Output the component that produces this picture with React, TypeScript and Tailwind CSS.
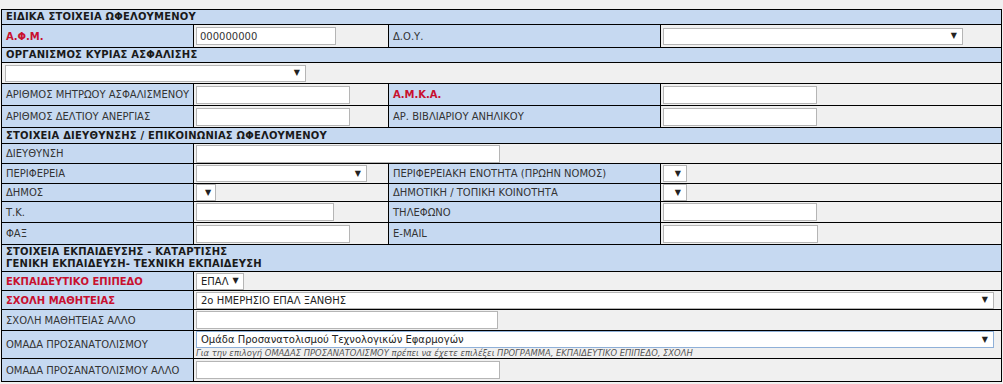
import React from "react";

const FONT = { fontFamily: '"DejaVu Sans", Verdana, sans-serif' };

function Field({ w, value = "" }: { w: string; value?: string }) {
  return (
    <input
      readOnly
      defaultValue={value}
      className={`${w} h-[18px] border border-[#b5b5b5] bg-white px-[3px] text-[10px] text-[#333] outline-none block`}
    />
  );
}

function Pick({
  w,
  value = "",
  focus = false,
}: {
  w: string;
  value?: string;
  focus?: boolean;
}) {
  return (
    <div
      className={`${w} h-[17px] border ${
        focus ? "border-[#8fb0d8]" : "border-[#b5b5b5]"
      } bg-white flex items-center justify-between gap-[4px] pl-[4px] pr-[5px] text-[10px] text-[#222]`}
    >
      <span className="whitespace-nowrap">{value}</span>
      <span className="text-[8px] leading-none">▼</span>
    </div>
  );
}

function Head({ children, h }: { children: React.ReactNode; h: string }) {
  return (
    <tr className={h}>
      <td colSpan={4} className="bg-[#c6d9f1] border border-black px-[4px] font-bold text-[10px] tracking-[0.2px] text-[#1a1a1a] leading-[12px] align-middle">
        {children}
      </td>
    </tr>
  );
}

function Label({ children, red = false }: { children: React.ReactNode; red?: boolean }) {
  return (
    <td
      className={`bg-[#c6d9f1] border border-black px-[4px] whitespace-nowrap text-[10px] ${
        red ? "text-[#c8102e] font-bold" : "text-[#333]"
      }`}
    >
      {children}
    </td>
  );
}

function Cell({ children, span = 1 }: { children?: React.ReactNode; span?: number }) {
  return (
    <td colSpan={span} className="border border-black px-[2px] align-middle">
      {children}
    </td>
  );
}

export default function App() {
  return (
    <div className="min-h-screen bg-[#f0f0f0] pt-[9px] pl-px" style={FONT}>
      <table className="table-fixed border-collapse w-[1000px]">
        <colgroup>
          <col className="w-[192px]" />
          <col className="w-[195px]" />
          <col className="w-[272px]" />
          <col className="w-[341px]" />
        </colgroup>
        <tbody>
          <Head h="h-[15px]">ΕΙΔΙΚΑ ΣΤΟΙΧΕΙΑ ΩΦΕΛΟΥΜΕΝΟΥ</Head>
          <tr className="h-[23px]">
            <Label red>Α.Φ.Μ.</Label>
            <Cell>
              <Field w="w-[140px]" value="000000000" />
            </Cell>
            <Label>Δ.Ο.Υ.</Label>
            <Cell>
              <Pick w="w-[300px]" />
            </Cell>
          </tr>
          <Head h="h-[15px]">ΟΡΓΑΝΙΣΜΟΣ ΚΥΡΙΑΣ ΑΣΦΑΛΙΣΗΣ</Head>
          <tr className="h-[21px]">
            <td colSpan={4} className="border border-black px-[3px]">
              <Pick w="w-[301px]" />
            </td>
          </tr>
          <tr className="h-[22px]">
            <Label>ΑΡΙΘΜΟΣ ΜΗΤΡΩΟΥ ΑΣΦΑΛΙΣΜΕΝΟΥ</Label>
            <Cell>
              <Field w="w-[154px]" />
            </Cell>
            <Label red>Α.Μ.Κ.Α.</Label>
            <Cell>
              <Field w="w-[154px]" />
            </Cell>
          </tr>
          <tr className="h-[22px]">
            <Label>ΑΡΙΘΜΟΣ ΔΕΛΤΙΟΥ ΑΝΕΡΓΙΑΣ</Label>
            <Cell>
              <Field w="w-[154px]" />
            </Cell>
            <Label>ΑΡ. ΒΙΒΛΙΑΡΙΟΥ ΑΝΗΛΙΚΟΥ</Label>
            <Cell>
              <Field w="w-[154px]" />
            </Cell>
          </tr>
          <Head h="h-[16px]">ΣΤΟΙΧΕΙΑ ΔΙΕΥΘΥΝΣΗΣ / ΕΠΙΚΟΙΝΩΝΙΑΣ ΩΦΕΛΟΥΜΕΝΟΥ</Head>
          <tr className="h-[20px]">
            <Label>ΔΙΕΥΘΥΝΣΗ</Label>
            <Cell span={3}>
              <Field w="w-[304px]" />
            </Cell>
          </tr>
          <tr className="h-[20px]">
            <Label>ΠΕΡΙΦΕΡΕΙΑ</Label>
            <Cell>
              <Pick w="w-[171px]" />
            </Cell>
            <Label>ΠΕΡΙΦΕΡΕΙΑΚΗ ΕΝΟΤΗΤΑ (ΠΡΩΗΝ ΝΟΜΟΣ)</Label>
            <Cell>
              <Pick w="w-[24px]" />
            </Cell>
          </tr>
          <tr className="h-[18px]">
            <Label>ΔΗΜΟΣ</Label>
            <Cell>
              <Pick w="w-[20px]" />
            </Cell>
            <Label>ΔΗΜΟΤΙΚΗ / ΤΟΠΙΚΗ ΚΟΙΝΟΤΗΤΑ</Label>
            <Cell>
              <Pick w="w-[24px]" />
            </Cell>
          </tr>
          <tr className="h-[21px]">
            <Label>Τ.Κ.</Label>
            <Cell>
              <Field w="w-[138px]" />
            </Cell>
            <Label>ΤΗΛΕΦΩΝΟ</Label>
            <Cell>
              <Field w="w-[154px]" />
            </Cell>
          </tr>
          <tr className="h-[22px]">
            <Label>ΦΑΞ</Label>
            <Cell>
              <Field w="w-[154px]" />
            </Cell>
            <Label>E-MAIL</Label>
            <Cell>
              <Field w="w-[155px]" />
            </Cell>
          </tr>
          <Head h="h-[27px]">
            ΣΤΟΙΧΕΙΑ ΕΚΠΑΙΔΕΥΣΗΣ - ΚΑΤΑΡΤΙΣΗΣ
            <br />
            ΓΕΝΙΚΗ ΕΚΠΑΙΔΕΥΣΗ- ΤΕΧΝΙΚΗ ΕΚΠΑΙΔΕΥΣΗ
          </Head>
          <tr className="h-[19px]">
            <Label red>ΕΚΠΑΙΔΕΥΤΙΚΟ ΕΠΙΠΕΔΟ</Label>
            <Cell span={3}>
              <Pick w="w-[48px]" value="ΕΠΑΛ" />
            </Cell>
          </tr>
          <tr className="h-[19px]">
            <Label red>ΣΧΟΛΗ ΜΑΘΗΤΕΙΑΣ</Label>
            <Cell span={3}>
              <Pick w="w-[798px]" value="2ο ΗΜΕΡΗΣΙΟ ΕΠΑΛ ΞΑΝΘΗΣ" />
            </Cell>
          </tr>
          <tr className="h-[21px]">
            <Label>ΣΧΟΛΗ ΜΑΘΗΤΕΙΑΣ ΑΛΛΟ</Label>
            <Cell span={3}>
              <Field w="w-[302px]" />
            </Cell>
          </tr>
          <tr className="h-[28px]">
            <Label>ΟΜΑΔΑ ΠΡΟΣΑΝΑΤΟΛΙΣΜΟΥ</Label>
            <Cell span={3}>
              <Pick w="w-[798px]" value="Ομάδα Προσανατολισμού Τεχνολογικών Εφαρμογών" focus />
              <div className="text-[8.4px] italic text-[#555] leading-[10px] whitespace-nowrap">
                Για την επιλογή ΟΜΑΔΑΣ ΠΡΟΣΑΝΑΤΟΛΙΣΜΟΥ πρέπει να έχετε επιλέξει ΠΡΟΓΡΑΜΜΑ, ΕΚΠΑΙΔΕΥΤΙΚΟ ΕΠΙΠΕΔΟ, ΣΧΟΛΗ
              </div>
            </Cell>
          </tr>
          <tr className="h-[23px]">
            <Label>ΟΜΑΔΑ ΠΡΟΣΑΝΑΤΟΛΙΣΜΟΥ ΑΛΛΟ</Label>
            <Cell span={3}>
              <Field w="w-[304px]" />
            </Cell>
          </tr>
        </tbody>
      </table>
    </div>
  );
}
